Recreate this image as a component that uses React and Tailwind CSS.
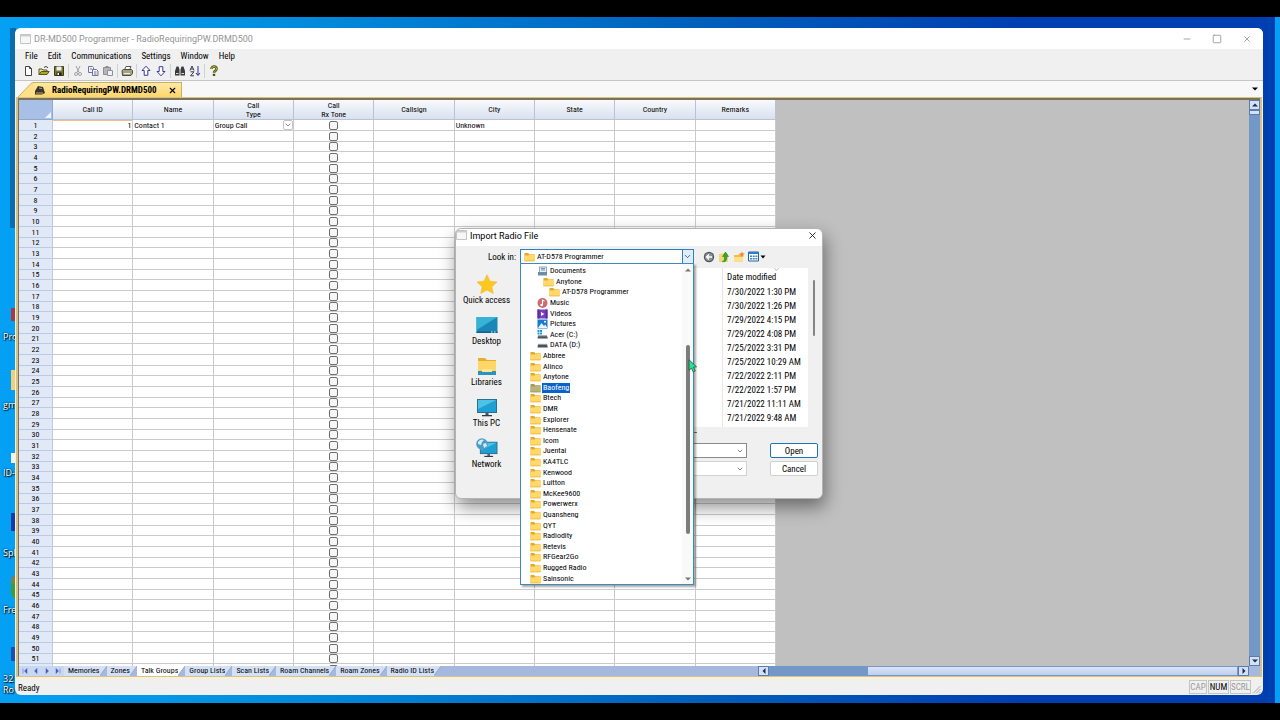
import { useState } from "react";
import { Minus, Square, X, ChevronDown } from "lucide-react";

const menus = ["File", "Edit", "Communications", "Settings", "Window", "Help"];
const columns = ["Call ID", "Name", "Call\nType", "Call\nRx Tone", "Callsign", "City", "State", "Country", "Remarks"];
const sheets = ["Memories", "Zones", "Talk Groups", "Group Lists", "Scan Lists", "Roam Channels", "Roam Zones", "Radio ID Lists"];
const rows = Array.from({ length: 52 }, (_, i) => i + 1);

const folders = [
  { name: "Documents", icon: "doc", level: 1 },
  { name: "Anytone", level: 2 },
  { name: "AT-D578 Programmer", level: 3 },
  { name: "Music", icon: "music", level: 1 },
  { name: "Videos", icon: "video", level: 1 },
  { name: "Pictures", icon: "picture", level: 1 },
  { name: "Acer (C:)", icon: "winDrive", level: 1 },
  { name: "DATA (D:)", icon: "drive", level: 1 },
  { name: "Abbree" },
  { name: "Alinco" },
  { name: "Anytone" },
  { name: "Baofeng", selected: true },
  { name: "Btech" },
  { name: "DMR" },
  { name: "Explorer" },
  { name: "Hensenate" },
  { name: "Icom" },
  { name: "Juentai" },
  { name: "KA4TLC" },
  { name: "Kenwood" },
  { name: "Luitton" },
  { name: "McKee9600" },
  { name: "Powerwerx" },
  { name: "Quansheng" },
  { name: "QYT" },
  { name: "Radiodity" },
  { name: "Retevis" },
  { name: "RFGear2Go" },
  { name: "Rugged Radio" },
  { name: "Sainsonic" },
];

const dates = [
  "7/30/2022 1:30 PM",
  "7/30/2022 1:26 PM",
  "7/29/2022 4:15 PM",
  "7/29/2022 4:08 PM",
  "7/25/2022 3:31 PM",
  "7/25/2022 10:29 AM",
  "7/22/2022 2:11 PM",
  "7/22/2022 1:57 PM",
  "7/21/2022 11:11 AM",
  "7/21/2022 9:48 AM",
];

const indent = ["pl-[9px]", "pl-[16px]", "pl-[22px]", "pl-[28px]"];

const FolderIcon = ({ dim }) => (
  <svg width="11" height="10" viewBox="0 0 11 10" className="shrink-0">
    <path d="M0.5 1h3.6l1.2 1.3h5.2V9h-10z" fill={dim ? "#a89a55" : "#e3a92c"} />
    <path d="M0.5 3.6h4l1-1h5V9.2h-10z" fill={dim ? "#b9b27c" : "#ffd969"} />
    <path d="M0.5 8.4h10v.9h-10z" fill={dim ? "#a09a68" : "#f0bd45"} />
  </svg>
);

const smallIcons = {
  doc: (
    <>
      <path d="M2 0.5h8v7H2z" fill="#8fa6bb" />
      <path d="M3 1.5h6v5H3z" fill="#e7eff6" />
      <path d="M4 2.5h4M4 4h4" stroke="#6f93b5" />
      <path d="M1 6h9v3.5H1z" fill="#6f8ca6" />
    </>
  ),
  music: (
    <>
      <circle cx="5.5" cy="5" r="5" fill="#cf6a6c" />
      <path d="M5.5 7V2.2l2 1" stroke="#fff" strokeWidth="1.1" fill="none" />
      <circle cx="4.6" cy="7" r="1.3" fill="#fff" />
    </>
  ),
  video: (
    <>
      <path d="M0.5 0.5h10v9h-10z" fill="#7a3fc0" />
      <path d="M0.5 0.5h2v9h-2zM8.5 0.5h2v9h-2z" fill="#5c2a9c" />
      <path d="M4 3l3.4 2L4 7z" fill="#fff" />
    </>
  ),
  picture: (
    <>
      <path d="M0.5 0.5h10v9h-10z" fill="#1a79cf" />
      <path d="M1 9l3.5-5L7 7l1.2-1.4L10.5 9z" fill="#e9f5ff" />
      <circle cx="8" cy="2.8" r="1" fill="#fff" />
    </>
  ),
  winDrive: (
    <>
      <path d="M0.5 0h2v2h-2zM3 0h2v2H3zM0.5 2.5h2v2h-2zM3 2.5h2v2H3z" fill="#1c9be0" />
      <path d="M1 5.5h9l.8 3H0.5z" fill="#4c5258" />
      <path d="M1 5.3h9v1H1z" fill="#a9b0b5" />
    </>
  ),
  drive: (
    <>
      <path d="M1 4h9l.8 3.5H0.5z" fill="#4c5258" />
      <path d="M1 3.8h9v1H1z" fill="#a9b0b5" />
    </>
  ),
};

const ItemIcon = ({ item }) =>
  item.icon ? (
    <svg width="11" height="10" viewBox="0 0 11 10" className="shrink-0">
      {smallIcons[item.icon]}
    </svg>
  ) : (
    <FolderIcon dim={item.selected} />
  );

const monitor = (
  <>
    <path d="M1 2h20v14H1z" fill="#2b6f8e" />
    <path d="M2 3h18v12H2z" fill="#1f9fd4" />
    <path d="M2 3h18L2 12z" fill="#4cc3e6" />
    <path d="M9.5 16h3v2h-3z" fill="#45555f" />
    <path d="M6 18h10v1.3H6z" fill="#2f3c44" />
  </>
);

const places = [
  {
    name: "Quick access",
    art: <path d="M11 0.8l3 6.4 7 .8-5.2 4.7 1.5 6.8L11 16l-6.3 3.5 1.5-6.8L1 8l7-.8z" fill="#fcc81e" stroke="#eeb112" strokeWidth="0.5" />,
  },
  {
    name: "Desktop",
    art: (
      <>
        <path d="M0.5 2h21v16h-21z" fill="#1b86b8" />
        <path d="M0.5 2h21L0.5 15z" fill="#35b4d6" />
        <path d="M0.5 16.5h21V18h-21z" fill="#14628c" />
        <path d="M15 17h1.5M18 17h1.5" stroke="#dff" />
      </>
    ),
  },
  {
    name: "Libraries",
    art: (
      <>
        <path d="M2 2h7l2 2h9v14H2z" fill="#e8ac32" />
        <path d="M2 5h18v10H2z" fill="#ffd767" />
        <path d="M2 15h18v4H2z" fill="#2a93c4" />
        <path d="M6 13h10v3H6z" fill="#ffe596" />
      </>
    ),
  },
  { name: "This PC", art: monitor },
  {
    name: "Network",
    art: (
      <>
        <g transform="translate(3 2) scale(.88)">{monitor}</g>
        <circle cx="6" cy="6" r="5.8" fill="#4d9cc4" />
        <path d="M2 4c2-3 5-3 6-2L6 4 5 7 2 6zM7 6l3-1 1 3-3 2z" fill="#d6ecf4" />
      </>
    ),
  },
];

const tools = [
  { name: "New", art: <path d="M2.5 1.5h4l2 2v7h-6zM6.5 1.5v2h2" fill="#fff" stroke="#444" /> },
  {
    name: "Open",
    art: (
      <>
        <path d="M1 9.5V4h3l1 1h4v1.5" fill="#e8e39a" stroke="#55551c" />
        <path d="M1 9.5L3.2 6.5h8L9 9.5z" fill="#a5aa2c" stroke="#55551c" />
        <path d="M6 2.5c1.5-1.5 3-1 4 .5" fill="none" stroke="#333" />
      </>
    ),
  },
  {
    name: "Save",
    art: (
      <>
        <path d="M1.5 1.5h9v9h-9z" fill="#74782c" stroke="#3c3c1c" />
        <path d="M3.5 1.5h5v4h-5z" fill="#eee" />
        <path d="M3.5 7.5h5v3h-5z" fill="#222" />
        <path d="M4.5 8h1.5v2H4.5z" fill="#fff" />
      </>
    ),
  },
  null,
  {
    name: "Cut",
    art: (
      <g fill="none" stroke="#a2a2a2">
        <path d="M4 1l3 6.5M8 1L5 7.5" />
        <circle cx="4" cy="9" r="1.5" />
        <circle cx="8" cy="9" r="1.5" />
      </g>
    ),
  },
  {
    name: "Copy",
    art: (
      <g fill="#f2f2f8" stroke="#71719b">
        <path d="M1.5 1.5h4l1 1v5h-5z" />
        <path d="M5.5 4.5h4l1.5 1.5v4.5H5.5z" />
        <path d="M3 4h2M7 7h2.5M7 9h2.5" />
      </g>
    ),
  },
  {
    name: "Paste",
    art: (
      <>
        <path d="M1.5 2.5h7v7h-7z" fill="#b5b5b5" stroke="#8d8d8d" />
        <path d="M3.5 1h3v2h-3z" fill="#8d8d8d" />
        <path d="M5.5 5.5h5v5h-5z" fill="#f1f1f1" stroke="#8f8fa0" />
      </>
    ),
  },
  null,
  {
    name: "Print",
    art: (
      <>
        <path d="M3.5 5L5 1.5h5L8.5 5" fill="#fff" stroke="#555" />
        <path d="M1 5.5L2.5 4.5h8l1 1v3l-1.5 2h-8.5z" fill="#a3a37e" stroke="#4c4c40" />
        <path d="M3 8.5h6" stroke="#eee" />
      </>
    ),
  },
  null,
  { name: "Read from radio", art: <path d="M6 1.2L10 5.5H7.8v4.8H4.2V5.5H2z" fill="#fff" stroke="#3b35a6" /> },
  { name: "Write to radio", art: <path d="M6 10.8L2 6.5h2.2V1.7h3.6v4.8H10z" fill="#fff" stroke="#3b35a6" /> },
  null,
  {
    name: "Find",
    art: (
      <>
        <path d="M2.5 1.5h2l1 3v6h-4.5V6zM9.5 1.5h-2l-1 3v6H11V6z" fill="#3b3b3b" />
        <path d="M2 8.5h2.5M7.5 8.5H10" stroke="#ddd" />
      </>
    ),
  },
  {
    name: "Sort",
    art: (
      <g fill="none" stroke="#3c3c4c">
        <path d="M1 5.5l2-4.5 2 4.5M1.8 4h2.5M1.5 6.8h3.5l-3.5 4h3.5" />
        <path d="M9 1v9M7 8l2 2.5L11 8" stroke="#302c9c" />
      </g>
    ),
  },
  null,
  {
    name: "Help",
    art: (
      <>
        <path d="M3.5 4c0-3.3 5-3.3 5 0 0 2-2.5 1.8-2.5 3.8" fill="none" stroke="#4b541a" strokeWidth="2.6" />
        <path d="M3.5 4c0-3.3 5-3.3 5 0 0 2-2.5 1.8-2.5 3.6" fill="none" stroke="#b5c22e" />
        <path d="M4.8 8.8h2.4V11H4.8z" fill="#4b541a" />
      </>
    ),
  },
];

// shortcuts that peek out from behind the window
const shortcuts = [
  { label: "Pro", iconTop: "top-[291px]", labelTop: "top-[314px]", look: "h-[13px] bg-[#a8394a]" },
  { label: "gm", iconTop: "top-[353px]", labelTop: "top-[382px]", look: "h-[20px] bg-[#f0cf78]" },
  { label: "ID-", iconTop: "top-[436px]", labelTop: "top-[450px]", look: "h-[10px] bg-[#f2f2f2]" },
  { label: "Spl", iconTop: "top-[496px]", labelTop: "top-[530px]", look: "h-[18px] bg-[#143aa8]" },
  { label: "Fre", iconTop: "top-[557px]", labelTop: "top-[587px]", look: "h-[26px] rounded-l-full bg-linear-to-b from-[#b5533a] to-[#3f9c3c] to-40%" },
  { label: "32\nRo", iconTop: "top-[630px]", labelTop: "top-[656px]", look: "h-[14px] bg-[#1e4fae]" },
];

const AppIcon = () => (
  <svg width="11" height="10" viewBox="0 0 11 10" className="shrink-0">
    <path d="M0.5 0.5h10v9h-10z" fill="#f7f7f7" stroke="#c4c4c4" />
    <path d="M1 1h9v1.5H1z" fill="#c7cdd6" />
  </svg>
);

const Arrow = ({ d, className = "fill-[#1c2c54]" }) => (
  <svg width="8" height="8" viewBox="0 0 8 8" className={className}>
    <path d={d} />
  </svg>
);

const UP = "M1 5.5h6L4 2.5z";
const DOWN = "M1 2.5h6L4 5.5z";
const LEFT = "M5.5 1v6L2.5 4z";
const RIGHT = "M2.5 1v6L5.5 4z";

const ScrollButton = ({ d, label }) => (
  <button
    aria-label={label}
    className="flex h-[10px] w-[11px] shrink-0 items-center justify-center border border-[#5b7bab] bg-[#d3e1f8]"
  >
    <Arrow d={d} />
  </button>
);

const Grid = () => (
  <table className="w-[757px] shrink-0 table-fixed self-start border-separate border-spacing-0 bg-white font-['Roboto_Condensed','Liberation_Sans',sans-serif] text-[8px] leading-[9px]">
    <thead>
      <tr className="h-[20px]">
        <th className="w-[34px] border-r border-b border-[#8fa6cf] bg-[#a9c0e6] p-0 align-bottom">
          <svg width="7" height="7" viewBox="0 0 7 7" className="ml-auto">
            <path d="M6 0v6H0z" fill="#eef4fd" />
          </svg>
        </th>
        {columns.map((c) => (
          <th
            key={c}
            className="border-r border-b border-[#b9c3d6] bg-linear-to-b from-[#f8fafd] to-[#d9e1ef] p-0 font-normal whitespace-pre-line"
          >
            {c}
          </th>
        ))}
      </tr>
    </thead>
    <tbody>
      {rows.map((n) => (
        <tr key={n} className="h-[11px] [&:nth-child(3n)]:h-[10px]">
          <th className="border-r border-b border-[#bccbe4] bg-[#e1e9f7] p-0 font-normal">{n}</th>
          {columns.map((c, i) => (
            <td
              key={c}
              className={
                "border-r border-b border-[#cbcbcb] p-0 " +
                (n === 1 && i === 0 ? "pr-px text-right shadow-[inset_0_1px_0_#f0c08c]" : i === 3 ? "" : "pl-px")
              }
            >
              {n === 1 && i === 0 && "1"}
              {n === 1 && i === 1 && "Contact 1"}
              {n === 1 && i === 2 && (
                <span className="relative flex items-center">
                  <select aria-label="Call Type" className="block h-[9px] w-full appearance-none pr-3 leading-[9px]">
                    <option>Group Call</option>
                  </select>
                  <ChevronDown className="pointer-events-none absolute right-0 h-[10px] w-[10px] rounded-xs border border-[#c4c4c4] bg-white text-[#555]" />
                </span>
              )}
              {i === 3 && (
                <input
                  type="checkbox"
                  aria-label={"Rx Tone " + n}
                  className="mx-auto block h-[9px] w-[9px] appearance-none rounded-[2px] border border-[#6e6e6e] bg-[#f6f6f6] checked:bg-[#1a6fc4]"
                />
              )}
              {n === 1 && i === 5 && "Unknown"}
            </td>
          ))}
        </tr>
      ))}
    </tbody>
  </table>
);

const SheetTabs = ({ active, onPick }) => (
  <div className="flex h-[10px] shrink-0 bg-[#a5b9df] font-['Roboto_Condensed','Liberation_Sans',sans-serif] text-[8px] leading-[10px]">
    <div className="flex w-[739px] shrink-0 overflow-hidden">
      <div className="flex w-[45px] shrink-0 items-center justify-around bg-[#c9d8f2]">
        {["M2 1.5v5M6 1.500v5L3.500 4z", "M5 1.500v5L2.500 4z", "M3 1.500v5L5.500 4z", "M6 1.500v5M2 1.500v5L4.500 4z"].map((d) => (
          <button key={d} aria-label="Scroll sheets">
            <Arrow d={d} className="fill-[#4a58c0] stroke-[#4a58c0] stroke-[0.5px]" />
          </button>
        ))}
      </div>
      {sheets.map((s) => (
        <button key={s} onClick={() => onPick(s)} className="flex shrink-0">
          <span className={"h-[10px] pl-1 whitespace-nowrap " + (s === active ? "bg-white" : "bg-[#d3e0f6]")}>{s}</span>
          <svg width="7" height="10" viewBox="0 0 7 10">
            <path d="M0 0h7L0 9.5z" fill={s === active ? "#fff" : "#d3e0f6"} />
            <path d="M7 0L0 9.5" stroke="#8fa2c6" strokeWidth="0.8" />
          </svg>
        </button>
      ))}
    </div>
    <ScrollButton d={LEFT} label="Scroll left" />
    <div className="flex flex-1 bg-[#7398c8]">
      <div className="ml-[21%] flex-1 border border-[#7b96c4] bg-linear-to-b from-[#d9e5fa] to-[#bdcff0]" />
    </div>
    <ScrollButton d={RIGHT} label="Scroll right" />
    <div className="w-[11px] shrink-0" />
  </div>
);

const Combo = ({ label, className }) => (
  <label className={"relative flex h-[15px] items-center border bg-white " + className}>
    <select aria-label={label} className="h-full w-full appearance-none">
      <option></option>
    </select>
    <ChevronDown className="pointer-events-none absolute right-[2px] h-2 w-2 text-[#444]" />
  </label>
);

const LookInList = ({ onPick }) => (
  <div className="absolute top-full -right-px -left-px z-20 flex h-[322px] border border-[#3f8ab8] bg-white text-[8px] shadow-[2px_2px_2px_rgba(0,0,0,0.35)]">
    <ul className="flex flex-1 flex-col pt-[2px]">
      {folders.map((f, i) => (
        <li key={i} className={"flex min-h-0 flex-1 items-center gap-px " + indent[f.level || 0]}>
          <ItemIcon item={f} />
          <button
            onClick={() => onPick(f.name)}
            className={"px-px leading-[10px] " + (f.selected ? "bg-[#0a64c8] text-white" : "")}
          >
            {f.name}
          </button>
        </li>
      ))}
    </ul>
    <div className="flex w-[11px] flex-col items-center bg-[#f9f9f9]">
      <Arrow d={UP} className="mt-[2px] fill-[#777]" />
      <div className="mt-[71px] h-[189px] w-[4px] rounded-full bg-[#7c7c7c]" />
      <Arrow d={DOWN} className="mt-auto mb-px fill-[#777]" />
    </div>
  </div>
);

const ImportDialog = () => {
  const [folder, setFolder] = useState("AT-D578 Programmer");

  return (
    <section
      role="dialog"
      aria-label="Import Radio File"
      className="absolute top-[211px] left-[455px] z-10 flex h-[271px] w-[368px] flex-col rounded-md border border-[#b4b4b4] bg-[#f0f0f0] font-['Roboto_Condensed','Liberation_Sans',sans-serif] text-[9px] leading-[12px] shadow-[2px_8px_18px_rgba(0,0,0,0.45)]"
    >
      <header className="flex h-[17px] items-start gap-[3px] rounded-t-md bg-white pt-px font-['Roboto','Liberation_Sans',sans-serif]">
        <AppIcon />
        <h2>Import Radio File</h2>
        <button aria-label="Close dialog" className="mr-1 ml-auto">
          <X className="h-[11px] w-[11px] text-[#222]" />
        </button>
      </header>

      <div className="mt-[3px] flex h-[15px] shrink-0 items-center text-[8px]">
        <label htmlFor="lookin" className="w-[60px] text-right text-[9px]">Look in:</label>
        <div className="relative ml-1 flex h-[15px] w-[174px] items-center gap-px border border-[#2f80bd] bg-white pl-[3px]">
          <FolderIcon />
          <input
            id="lookin"
            value={folder}
            onChange={(e) => setFolder(e.target.value)}
            className="min-w-0 flex-1 pl-px outline-none"
          />
          <button aria-label="Toggle list" className="flex h-full w-[11px] items-center border-l border-[#2f80bd] bg-[#deeefa]">
            <ChevronDown className="h-[9px] w-[9px] text-[#335]" />
          </button>
          <LookInList onPick={setFolder} />
        </div>
        <div className="ml-[9px] flex gap-[3px]">
          <button aria-label="Back">
            <svg width="12" height="12" viewBox="0 0 12 12">
              <circle cx="6" cy="6" r="5.2" fill="#53565a" />
              <circle cx="6" cy="6" r="4" fill="#8b8f93" />
              <path d="M9 6H3.5M6 3.5L3.5 6 6 8.5" fill="none" stroke="#fff" strokeWidth="1.3" />
            </svg>
          </button>
          <button aria-label="Up one level">
            <svg width="12" height="12" viewBox="0 0 12 12">
              <path d="M1 3l5-1 4 1v8H1z" fill="#f4d877" />
              <path d="M4 10.5c2 0 2.5-1 2.5-5H4.5L7.500 1l3 4.500H8.800c0 4-1 6-4.800 5z" fill="#31a52c" stroke="#1b7a1c" strokeWidth="0.5" />
            </svg>
          </button>
          <button aria-label="New folder">
            <svg width="12" height="12" viewBox="0 0 12 12">
              <path d="M1 4h4l1-1h4v7.5H1z" fill="#efbf4e" />
              <path d="M1 6h9v4.5H1z" fill="#ffe08a" />
              <path d="M9 0.5l.8 1.7 1.9.3-1.4 1.3.3 1.9L9 4.8l-1.6.9.3-1.9-1.4-1.3 1.9-.3z" fill="#f28a2e" />
            </svg>
          </button>
          <button aria-label="View menu" className="flex items-center">
            <svg width="11" height="11" viewBox="0 0 11 11">
              <path d="M0.5 1h10v9h-10z" fill="#fff" stroke="#20639c" />
              <path d="M0.5 1h10v2h-10z" fill="#2b7fc4" />
              <path d="M2 4.5h2v1.5H2zM4.7 4.5h2v1.5h-2zM7.4 4.5h2v1.5h-2zM2 7h2v1.5H2zM4.7 7h2v1.5h-2zM7.4 7h2v1.5h-2z" fill="#3b82c4" />
            </svg>
            <Arrow d="M1.5 2.5h5L4 5.5z" className="fill-black" />
          </button>
        </div>
      </div>

      <div className="mt-[4px] flex flex-1">
        <nav className="mr-[5px] ml-[2px] w-[57px] shrink-0">
          {places.map((p) => (
            <button key={p.name} className="flex h-[41px] w-full flex-col items-center pt-[6px]">
              <svg width="22" height="20" viewBox="0 0 22 20">{p.art}</svg>
              {p.name}
            </button>
          ))}
        </nav>

        <div className="flex-1">
          <div className="flex h-[159px]">
            <div className="flex w-[288px] bg-white">
              <div className="w-[203px] border-r border-[#e6e6e6]" />
              <table className="ml-[4px] self-start text-left">
                <thead>
                  <tr className="relative h-[17px]">
                    <th className="p-0 font-normal">
                      Date modified
                      <ChevronDown className="absolute top-[-2px] left-[46px] h-[7px] w-[7px] text-[#777]" />
                    </th>
                  </tr>
                </thead>
                <tbody>
                  {dates.map((d) => (
                    <tr key={d} className="h-[14px]">
                      <td className="p-0 whitespace-nowrap">{d}</td>
                    </tr>
                  ))}
                </tbody>
              </table>
            </div>
            <div className="mt-3 ml-[5px] h-[56px] w-[2px] rounded-full bg-[#858585]" />
          </div>
          <div className="ml-[20px] h-[14px] w-[157px] pt-[5px]">
            <div className="h-px bg-[#6c6c6c]" />
          </div>

          <div className="mt-[2px] flex justify-between pr-[4px]">
            <div className="w-[227px] space-y-[3px]">
              <Combo label="File name" className="border-[#8a8a8a]" />
              <Combo label="Files of type" className="border-[#d2d2d2]" />
            </div>
            <div className="flex w-[48px] flex-col gap-[3px]">
              <button className="h-[15px] rounded-xs border border-[#1f74b8] bg-white">Open</button>
              <button className="h-[15px] rounded-xs border border-[#d0d0d0] bg-white">Cancel</button>
            </div>
          </div>
        </div>
      </div>

      <svg width="10" height="14" viewBox="0 0 10 14" className="pointer-events-none absolute top-[130px] left-[232px] z-30">
        <path d="M1 0.8l7.5 7-3 .4 1.8 3.8-2 1-1.8-3.8L1 11.2z" fill="#2fdc93" stroke="#14573d" strokeWidth="0.8" />
      </svg>
    </section>
  );
};

export default function App() {
  const [sheet, setSheet] = useState("Talk Groups");

  return (
    <div className="flex h-screen flex-col bg-black py-[17px] text-black">
      <main className="relative flex flex-1 flex-col overflow-hidden border-r-[5px] border-[#05a0f6] bg-[linear-gradient(90deg,#04a0f4_0%,#0090e0_20%,#0060bc_55%,#003fb2_80%)] pt-[11px] pr-[12px] pb-[8px] pl-[15px]">
        <div className="absolute top-[11px] left-[10px] h-[200px] w-[6px] bg-[#0b6cb0]" />
        {shortcuts.map((s) => (
          <div key={s.label}>
            <div className={"absolute left-[11px] w-[8px] " + s.iconTop + " " + s.look} />
            <span
              className={
                "absolute left-[3px] font-['Open_Sans',sans-serif] text-[9px] leading-[11px] whitespace-pre-line text-white [text-shadow:1px_1px_1px_#000,0_0_2px_#000] " +
                s.labelTop
              }
            >
              {s.label}
            </span>
          </div>
        ))}

        <section className="relative flex min-h-0 flex-1 flex-col overflow-hidden rounded-md bg-[#f0f0f0] font-['Roboto_Condensed','Liberation_Sans',sans-serif] text-[9px] leading-[12px]">
          <header className="flex h-[21px] shrink-0 items-center gap-[3px] bg-white pr-[11px] pl-[5px] font-['Roboto','Liberation_Sans',sans-serif] text-[#949494]">
            <AppIcon />
            <h1>DR-MD500 Programmer - RadioRequiringPW.DRMD500</h1>
            <div className="ml-auto flex gap-[20px]">
              <button aria-label="Minimize"><Minus className="h-[10px] w-[10px]" /></button>
              <button aria-label="Maximize"><Square className="h-[10px] w-[10px]" /></button>
              <button aria-label="Close"><X className="h-[10px] w-[10px]" /></button>
            </div>
          </header>

          <nav className="flex h-[14px] shrink-0 items-center gap-[10px] pl-[10px]">
            {menus.map((m) => (
              <button key={m}>{m}</button>
            ))}
          </nav>

          <div className="flex h-[18px] shrink-0 items-center border-b border-[#c6c6c6] pb-px pl-[6px]">
            {tools.map((t, i) =>
              t ? (
                <button key={t.name} aria-label={t.name} className="flex w-[15px] justify-center">
                  <svg width="12" height="12" viewBox="0 0 12 12">{t.art}</svg>
                </button>
              ) : (
                <span key={i} className="mr-px ml-[2px] h-[14px] w-px bg-[#d0d0d0]" />
              )
            )}
          </div>

          <div className="flex h-[16px] shrink-0 items-end bg-[#f8f8f8] pr-[4px] pl-[3px]">
            <svg width="16" height="15" viewBox="0 0 16 15">
              <path d="M0 15L13 1.5Q14 0.5 16 0.5V15z" fill="#ffe08a" />
              <path d="M0 15L13 1.5Q14 0.5 16 0.5" fill="none" stroke="#c9b06a" />
            </svg>
            <div className="flex h-[15px] items-center border-t border-r border-[#c9b06a] bg-linear-to-b from-[#ffe9a8] to-[#fdd667] pr-[4px] font-bold">
              <svg width="12" height="10" viewBox="0 0 12 10" className="mr-[6px]">
                <path d="M1 6l3-5 5 1 2 6-3 1.5H1z" fill="#3a352a" />
                <path d="M5 3l3 .5M2 8h7" stroke="#b8a77c" />
              </svg>
              RadioRequiringPW.DRMD500
              <button aria-label="Close tab" className="ml-[11px]">
                <X className="h-[9px] w-[9px]" strokeWidth={3} />
              </button>
            </div>
            <button aria-label="Open files" className="mb-1 ml-auto">
              <Arrow d="M1 2.5h6L4 5.5z" className="fill-black" />
            </button>
          </div>

          <div className="flex min-h-0 flex-1 flex-col border-x border-[#f8f1da] bg-[#d6c288] px-[2px] pt-px pb-px">
            <div className="flex min-h-0 flex-1 flex-col border-t-2 border-l border-[#7c7256] bg-[#c0c0c0]">
              <div className="flex min-h-0 flex-1 overflow-hidden">
                <Grid />
                <div className="flex-1" />
                <div className="flex w-[11px] shrink-0 flex-col bg-[#7398c8]">
                  <ScrollButton d={UP} label="Scroll up" />
                  <div className="h-[5px] border border-[#5b7bab] bg-[#d3e1f8]" />
                  <div className="mt-auto flex">
                    <ScrollButton d={DOWN} label="Scroll down" />
                  </div>
                </div>
              </div>
              <SheetTabs active={sheet} onPick={setSheet} />
            </div>
          </div>

          <footer className="flex h-[18px] shrink-0 items-end border-t-2 border-[#f8f1da] pr-[2px] pb-px pl-[3px]">
            Ready
            <div className="ml-auto flex gap-px text-center text-[#9a9a9a]">
              <span className="w-[18px] border border-[#c4c4c4]">CAP</span>
              <span className="w-[21px] border border-[#c4c4c4] text-black">NUM</span>
              <span className="w-[21px] border border-[#c4c4c4]">SCRL</span>
            </div>
            <svg width="9" height="9" viewBox="0 0 9 9" className="ml-px">
              <path d="M1 8.5L8.5 1M4 8.5L8.5 4M7 8.5L8.5 7" stroke="#a5a5a5" />
            </svg>
          </footer>
        </section>

        <ImportDialog />
      </main>
    </div>
  );
}
